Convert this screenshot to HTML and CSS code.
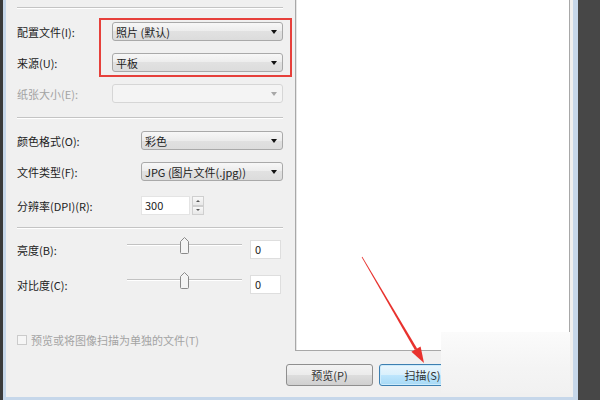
FILE: index.html
```html
<!DOCTYPE html>
<html>
<head>
<meta charset="utf-8">
<link rel="stylesheet" href="styles.css">
</head>
<body>
<div class="screen">
  <div class="edge"></div>
  <div class="frame">
    <div class="main">
      <div class="panel">
        <div class="sep sep1"></div>
        <div class="row r1"><span class="lbl lbl-a">配置文件(I):</span><div class="select wide"><span>照片 (默认)</span><i class="caret"></i></div></div>
        <div class="row r2"><span class="lbl lbl-a">来源(U):</span><div class="select wide"><span>平板</span><i class="caret"></i></div></div>
        <div class="row r2"><span class="lbl lbl-a dis">纸张大小(E):</span><div class="select wide disabled"><span></span><i class="caret"></i></div></div>
        <div class="sep sep2"></div>
        <div class="row r4"><span class="lbl lbl-b">颜色格式(O):</span><div class="select narrow"><span>彩色</span><i class="caret"></i></div></div>
        <div class="row r2"><span class="lbl lbl-b">文件类型(F):</span><div class="select narrow"><span>JPG (图片文件(.jpg))</span><i class="caret"></i></div></div>
        <div class="row r6"><span class="lbl lbl-b">分辨率(DPI)(R):</span><div class="num">300</div><div class="spin"><div class="sb"><i class="up"></i></div><div class="sb"><i class="down"></i></div></div></div>
        <div class="sep sep3"></div>
        <div class="row r7"><span class="lbl lbl-c">亮度(B):</span><div class="slider"><div class="track"></div><svg class="thumb" width="9" height="17" viewBox="0 0 9 17"><path d="M0.5 4.5 L4.5 0.5 L8.5 4.5 L8.5 15.5 Q8.5 16.5 7.5 16.5 L1.5 16.5 Q0.5 16.5 0.5 15.5 Z" fill="#f4f4f4" stroke="#8a8a8a"/></svg></div><div class="val">0</div></div>
        <div class="row r8"><span class="lbl lbl-c">对比度(C):</span><div class="slider"><div class="track"></div><svg class="thumb" width="9" height="17" viewBox="0 0 9 17"><path d="M0.5 4.5 L4.5 0.5 L8.5 4.5 L8.5 15.5 Q8.5 16.5 7.5 16.5 L1.5 16.5 Q0.5 16.5 0.5 15.5 Z" fill="#f4f4f4" stroke="#8a8a8a"/></svg></div><div class="val">0</div></div>
        <div class="row r9"><span class="check"></span><span class="dis">预览或将图像扫描为单独的文件(T)</span></div>
      </div>
      <div class="preview"></div>
    </div>
    <div class="btns">
      <div class="btn">预览(P)</div>
      <div class="btn primary">扫描(S)</div>
    </div>
  </div>
  <div class="highlight"></div>
  <div class="watermark"></div>
  <svg class="arrow" width="600" height="400" viewBox="0 0 600 400">
    <polygon points="362.3,256.8 361.7,257.2 414.9,349.9 417.1,348.6" fill="#e8322e"/>
    <polygon points="424,363 420.6,346.4 411.4,351.8" fill="#e8322e"/>
  </svg>
</div>
</body>
</html>
```
FILE: styles.css
```css
body {
  margin: 0;
  font-family: "Noto Sans CJK SC", "Noto Sans", sans-serif;
  font-size: 11px;
  color: #222;
}
.screen {
  position: relative;
  width: 600px;
  height: 400px;
  background: #474747;
  display: flex;
  overflow: hidden;
}
.edge {
  width: 3px;
  background: #3b3b3b;
}
.frame {
  width: 567px;
  height: 397px;
  border-left: 3px solid #c6d7ea;
  border-right: 5px solid #c6d7ea;
  border-bottom: 3px solid #c6d7ea;
  background: #f0f0f0;
  display: flex;
  flex-direction: column;
}
.main {
  display: flex;
  height: 351px;
}
.panel {
  width: 266px;
  padding-left: 11px;
  display: flex;
  flex-direction: column;
}
.preview {
  margin-left: 12px;
  width: 273px;
  height: 350px;
  background: #fff;
  border: 1px solid #a8a8a8;
  border-top: none;
  box-shadow: inset 1px 0 0 #e6e6e6;
}
.sep {
  height: 0;
  border-top: 1px solid #c4c4c4;
  border-bottom: 1px solid #fff;
}
.sep1 { margin-top: 7px; }
.sep2 { margin-top: 14px; }
.sep3 { margin-top: 12px; }
.row {
  display: flex;
  align-items: center;
  height: 19px;
  flex: none;
}
.r1 { margin-top: 13px; }
.r2 { margin-top: 12px; }
.r4 { margin-top: 12px; }
.r6 { margin-top: 15px; }
.r7 { margin-top: 11px; }
.r8 { margin-top: 16px; }
.r9 { margin-top: 36px; }
.lbl { flex: none; white-space: nowrap; }
.lbl-a { width: 95px; }
.lbl-b { width: 124px; }
.lbl-c { width: 110px; }
.dis { color: #a3a3a3; }
.select {
  box-sizing: border-box;
  height: 19px;
  border: 1px solid #a9a9a9;
  border-radius: 3px;
  background: linear-gradient(#f7f7f7, #ececec 50%, #e1e1e1 50%, #dcdcdc);
  display: flex;
  align-items: center;
  justify-content: space-between;
  padding: 0 5px 0 3px;
  white-space: nowrap;
}
.wide { width: 171px; }
.narrow { width: 142px; }
.select.disabled {
  background: #f4f4f4;
  border-color: #d6d6d6;
}
.caret {
  width: 0;
  height: 0;
  border-left: 3.5px solid transparent;
  border-right: 3.5px solid transparent;
  border-top: 4px solid #111;
}
.disabled .caret { border-top-color: #a8a8a8; }
.num {
  box-sizing: border-box;
  width: 49px;
  height: 19px;
  background: #fff;
  border: 1px solid #e4e4e4;
  padding-left: 3px;
  line-height: 17px;
}
.spin {
  margin-left: 2px;
  width: 12px;
  height: 19px;
  display: flex;
  flex-direction: column;
}
.sb {
  flex: 1;
  box-sizing: border-box;
  border: 1px solid #cfcfcf;
  background: linear-gradient(#f8f8f8, #e8e8e8);
  display: flex;
  align-items: center;
  justify-content: center;
}
.up {
  border-left: 2.5px solid transparent;
  border-right: 2.5px solid transparent;
  border-bottom: 2.5px solid #555;
}
.down {
  border-left: 2.5px solid transparent;
  border-right: 2.5px solid transparent;
  border-top: 2.5px solid #555;
}
.slider {
  position: relative;
  width: 115px;
  height: 19px;
  flex: none;
}
.track {
  margin-top: 4px;
  height: 1px;
  background: #c2c2c2;
  border-bottom: 1px solid #fff;
}
.thumb {
  position: absolute;
  left: 53px;
  top: -3px;
}
.val {
  box-sizing: border-box;
  margin-left: 8px;
  width: 31px;
  height: 19px;
  background: #fff;
  border: 1px solid #dedede;
  padding-left: 4px;
  line-height: 17px;
}
.check {
  box-sizing: border-box;
  width: 10px;
  height: 10px;
  border: 1px solid #cbcbcb;
  background: #f6f6f6;
  margin-right: 4px;
}
.btns {
  display: flex;
  gap: 6px;
  padding-left: 280px;
  margin-top: 13px;
}
.btn {
  box-sizing: border-box;
  width: 87px;
  height: 22px;
  border: 1px solid #8f8f8f;
  border-radius: 3px;
  background: linear-gradient(#f3f3f3, #ebebeb 50%, #dddddd 50%, #d0d0d0);
  display: flex;
  align-items: center;
  justify-content: center;
  color: #333;
}
.primary {
  border-color: #3c7fb1;
  background: linear-gradient(#eaf6fd, #d9f0fc 50%, #bee6fd 50%, #a7d9f5);
  box-shadow: inset 0 0 0 1px #cdebfb;
}
.highlight {
  position: absolute;
  left: 99px;
  top: 18px;
  width: 189px;
  height: 55px;
  border: 2px solid #e6403b;
}
.watermark {
  position: absolute;
  left: 441px;
  top: 332px;
  width: 129px;
  height: 61px;
  background: linear-gradient(#fbfbfb, #f4f4f4 60%, #f1f1f1);
}
.arrow {
  position: absolute;
  left: 0;
  top: 0;
}
```
